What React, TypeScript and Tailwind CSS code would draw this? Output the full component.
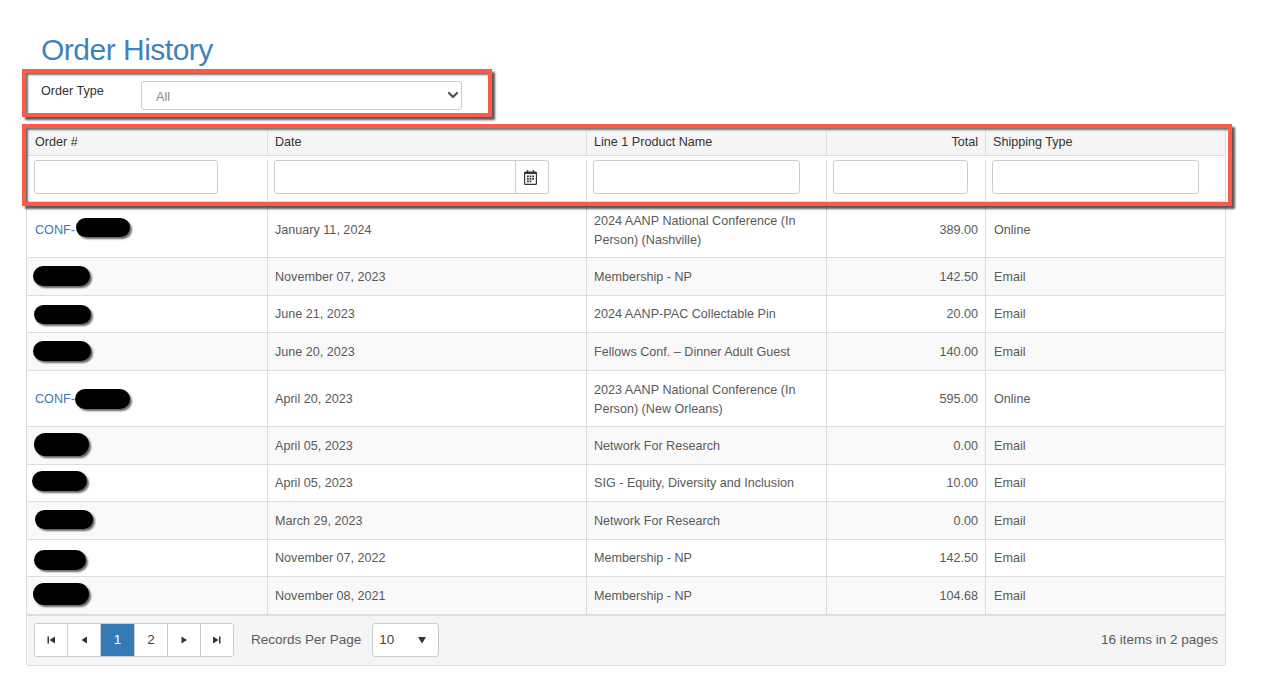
import { ChevronDown } from 'lucide-react';

const rows = [
  { prefix: 'CONF-', blob: 'left-[49px] top-[16px] w-[54px] h-[19px]', h: 'h-[56.5px]', date: 'January 11, 2024', name: '2024 AANP National Conference (In Person) (Nashville)', total: '389.00', ship: 'Online' },
  { blob: 'left-[6px] top-[8px] w-[57px] h-[20px]', h: 'h-[37.5px]', date: 'November 07, 2023', name: 'Membership - NP', total: '142.50', ship: 'Email' },
  { blob: 'left-[7px] top-[9px] w-[57px] h-[19px]', h: 'h-[37.5px]', date: 'June 21, 2023', name: '2024 AANP-PAC Collectable Pin', total: '20.00', ship: 'Email' },
  { blob: 'left-[6px] top-[8px] w-[58px] h-[20px]', h: 'h-[37.5px]', date: 'June 20, 2023', name: 'Fellows Conf. – Dinner Adult Guest', total: '140.00', ship: 'Email' },
  { prefix: 'CONF-', blob: 'left-[48px] top-[18px] w-[55px] h-[20px]', h: 'h-[56.5px]', date: 'April 20, 2023', name: '2023 AANP National Conference (In Person) (New Orleans)', total: '595.00', ship: 'Online' },
  { blob: 'left-[7px] top-[6px] w-[55px] h-[23px]', h: 'h-[37.5px]', date: 'April 05, 2023', name: 'Network For Research', total: '0.00', ship: 'Email' },
  { blob: 'left-[5px] top-[6px] w-[55px] h-[20px]', h: 'h-[37.5px]', date: 'April 05, 2023', name: 'SIG - Equity, Diversity and Inclusion', total: '10.00', ship: 'Email' },
  { blob: 'left-[8px] top-[8px] w-[58px] h-[19px]', h: 'h-[37.5px]', date: 'March 29, 2023', name: 'Network For Research', total: '0.00', ship: 'Email' },
  { blob: 'left-[7px] top-[10px] w-[52px] h-[20px]', h: 'h-[37.5px]', date: 'November 07, 2022', name: 'Membership - NP', total: '142.50', ship: 'Email' },
  { blob: 'left-[6px] top-[6px] w-[56px] h-[22px]', h: 'h-[37.5px]', date: 'November 08, 2021', name: 'Membership - NP', total: '104.68', ship: 'Email' },
];

const cols = 'grid grid-cols-[241px_319px_240px_159px_1fr]';
const input = 'h-[34px] border border-[#ccc] rounded-[3px] bg-white';

function PagerIcon({ d }: { d: string }) {
  return (
    <svg width="10" height="10" viewBox="0 0 10 10" fill="#333">
      <path d={d} />
    </svg>
  );
}

function PagerButton({ children, active, width = 'w-[33px]' }: { children: React.ReactNode; active?: boolean; width?: string }) {
  return (
    <div className={`${width} flex items-center justify-center border-r border-[#ccc] last:border-r-0 text-[13.5px] ${active ? 'bg-[#337ab7] text-white' : 'bg-white text-[#444]'}`}>
      {children}
    </div>
  );
}

function CalendarIcon() {
  return (
    <svg width="13" height="15" viewBox="0 0 13 15" fill="#333" className="mr-[4px]">
      <path fillRule="evenodd" d="M3 0h1.200v1.500h4.600V0H10v1.500h1.500A1.500 1.500 0 0 1 13 3v10.500a1.500 1.500 0 0 1-1.500 1.500h-10A1.500 1.500 0 0 1 0 13.500V3a1.500 1.500 0 0 1 1.500-1.500H3V0zM1.200 4v9.500c0 .2.100.3.300.3h10c.2 0 .3-.1.300-.3V4H1.200z" />
      <path d="M3 5.500h1.800v1.800H3zM5.600 5.500h1.800v1.800H5.600zM8.200 5.500H10v1.800H8.200zM3 8h1.800v1.800H3zM5.600 8h1.800v1.800H5.600zM8.200 8H10v1.800H8.200zM3 10.500h1.800v1.800H3zM5.600 10.500h1.800v1.800H5.600z" />
    </svg>
  );
}

export default function App() {
  return (
    <div className="relative h-[697px] w-[1268px] overflow-hidden bg-white font-['Liberation_Sans',sans-serif] text-[12.6px] text-[#5a5a5a]">
      <div className="pl-[26px] pr-[42px] pt-[31px]">
        <h1 className="pl-[15px] text-[30px] leading-[38px] text-[#3f82bd] font-light tracking-[-0.5px]">Order History</h1>

        <div className="flex mt-[12px] h-[29px] pl-[15px]">
          <label className="w-[100px] pt-[1px] text-[#333]">Order Type</label>
          <div className="relative w-[321px] h-[29px] border border-[#ccc] rounded-[3px] bg-white flex items-center pl-[14px] pt-[3px] text-[#8a8a8a]">
            All
            <ChevronDown size={16} strokeWidth={3.5} className="absolute right-[0px] top-[5px] text-[#555]" />
          </div>
        </div>

        <div className="mt-[19px] border-x border-b border-[#ddd] rounded-b-[3px]">
          <div className={`${cols} h-[27px] bg-[#f5f5f5] border-b border-[#ddd] text-[#333] pt-[1px]`}>
            <div className="flex items-center pl-[8px] border-r border-[#ddd]">Order #</div>
            <div className="flex items-center pl-[7px] border-r border-[#ddd]">Date</div>
            <div className="flex items-center pl-[7px] border-r border-[#ddd]">Line 1 Product Name</div>
            <div className="flex items-center justify-end pr-[7px] border-r border-[#ddd]">Total</div>
            <div className="flex items-center pl-[7px]">Shipping Type</div>
          </div>

          <div className={`${cols} h-[45.5px] pt-[4px] border-b border-[#ddd]`}>
            <div className="pl-[7px] border-r border-[#ddd]"><div className={`${input} w-[184px]`} /></div>
            <div className="pl-[6px] border-r border-[#ddd]">
              <div className={`${input} w-[275px] flex justify-end`}>
                <div className="w-[33px] border-l border-[#ccc] flex items-center justify-center"><CalendarIcon /></div>
              </div>
            </div>
            <div className="pl-[6px] border-r border-[#ddd]"><div className={`${input} w-[207px]`} /></div>
            <div className="pl-[6px] border-r border-[#ddd]"><div className={`${input} w-[135px]`} /></div>
            <div className="pl-[6px]"><div className={`${input} w-[207px]`} /></div>
          </div>

          {rows.map((r, i) => (
            <div key={i} className={`${cols} ${r.h} border-b border-[#ddd] ${i % 2 ? 'bg-[#f9f9f9]' : 'bg-white'}`}>
              <div className="relative flex items-center pl-[8px] pt-[2px] border-r border-[#ddd] text-[#337ab7]">
                {r.prefix}
                <span className={`absolute ${r.blob} rounded-full bg-black shadow-[2px_2px_2px_rgba(0,0,0,0.6)]`} />
              </div>
              <div className="flex items-center pl-[7px] pt-[2px] border-r border-[#ddd]">{r.date}</div>
              <div className={`flex items-center pl-[7px] pr-[16px] ${r.prefix ? 'pt-[3px]' : 'pt-[2px]'} border-r border-[#ddd] leading-[19px]`}>{r.name}</div>
              <div className="flex items-center justify-end pr-[7px] pt-[2px] border-r border-[#ddd]">{r.total}</div>
              <div className="flex items-center pl-[8px] pt-[2px]">{r.ship}</div>
            </div>
          ))}

          <div className="h-[50px] bg-[#f5f5f5] border-t border-[#ddd] flex items-center pl-[7px] pr-[7px] text-[13.5px] rounded-b-[3px]">
            <div className="flex h-[34px] border border-[#ccc] rounded-[3px] overflow-hidden">
              <PagerButton><PagerIcon d="M1.500 1.500h1.500v7H1.500zM9 1.500v7L3.500 5z" /></PagerButton>
              <PagerButton><PagerIcon d="M8 1.500v7L2.500 5z" /></PagerButton>
              <PagerButton active width="w-[34px]">1</PagerButton>
              <PagerButton>2</PagerButton>
              <PagerButton><PagerIcon d="M2.500 1.500v7L8 5z" /></PagerButton>
              <PagerButton width="w-[32px]"><PagerIcon d="M1 1.500v7L6.500 5zM7 1.500h1.500v7H7z" /></PagerButton>
            </div>
            <span className="ml-[17px] pt-[1px]">Records Per Page</span>
            <div className="ml-[11px] w-[67px] h-[34px] border border-[#ccc] rounded-[3px] bg-white flex items-center justify-between pl-[6px] pr-[11px] text-[#444]">
              10
              <PagerIcon d="M1 2h8L5 8.500z" />
            </div>
            <span className="ml-auto pt-[1px]">16 items in 2 pages</span>
          </div>
        </div>
      </div>

      <div className="absolute left-[22px] top-[69px] w-[470px] h-[48px] border-[4px] border-[#fd5a4e] shadow-[3px_3px_2px_rgba(0,0,0,0.65),inset_2px_2px_2px_rgba(0,0,0,0.55)]" />
      <div className="absolute left-[22px] top-[124px] w-[1210px] h-[82px] border-[4px] border-[#fd5a4e] shadow-[3px_3px_2px_rgba(0,0,0,0.65),inset_2px_2px_2px_rgba(0,0,0,0.55)]" />
    </div>
  );
}
